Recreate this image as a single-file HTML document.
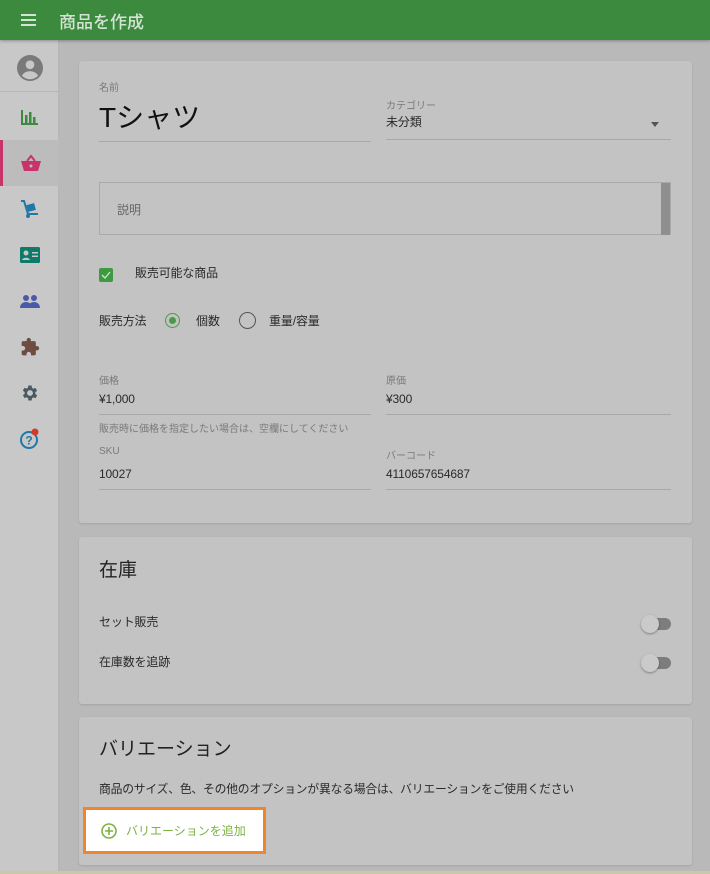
<!DOCTYPE html>
<html><head><meta charset="utf-8"><style>
*{box-sizing:border-box;margin:0;padding:0}
body{width:710px;height:874px;overflow:hidden;background:#b9b9b9;font-family:"Liberation Sans","Noto Sans CJK JP",sans-serif;color:#222;position:relative}
.hdr{position:absolute;left:0;top:0;width:710px;height:40px;background:#3b8a3e;box-shadow:0 1px 3px rgba(0,0,0,.3);z-index:2}
.hdr .t{position:absolute;left:59px;top:8px;font-size:17px;color:#d4e4d4;font-weight:500}
.side{position:absolute;left:0;top:40px;width:59px;height:834px;background:#c8c8c8;border-right:1px solid #b5b5b5}
.si{position:absolute;left:0;width:59px;height:46px;display:flex;align-items:center;justify-content:center}
.card{position:absolute;left:79px;width:613px;background:#c3c3c3;border-radius:3px;box-shadow:0 1px 2px rgba(0,0,0,.12)}
.lbl{position:absolute;font-size:10px;color:#7a7a7a}
.val{position:absolute;font-size:12px;color:#2a2a2a;letter-spacing:-0.15px}
.ln{position:absolute;height:1px;background:#a8a8a8}
.tg{position:absolute;width:28px;height:12px;border-radius:6px;background:#7d7d7d}
.tg:before{content:"";position:absolute;left:-2px;top:-3px;width:18px;height:18px;border-radius:50%;background:#cacaca;box-shadow:0 1px 2px rgba(0,0,0,.35)}
</style></head><body>
<div class="hdr">
<div style="position:absolute;left:21px;top:14px;width:15px;height:2px;background:#d4e4d4;box-shadow:0 5px 0 #d4e4d4,0 10px 0 #d4e4d4"></div>
<div class="t">商品を作成</div></div>
<div class="side">
<div class="si" style="top:4px;height:48px;border-bottom:1px solid #b5b5b5"><svg width="26" height="26" viewBox="0 0 24 24"><circle cx="12" cy="12" r="12" fill="#7a7a7a"/><circle cx="12" cy="9" r="4" fill="#c8c8c8"/><path d="M4.5 19c2-3 4.5-4 7.5-4s5.5 1 7.5 4A10 10 0 0 1 4.5 19z" fill="#c8c8c8"/></svg></div>
<div class="si" style="top:54px"><svg width="18" height="16" viewBox="0 0 18 16"><path d="M1 1v14h16" stroke="#3b8a3e" stroke-width="2" fill="none"/><rect x="4" y="6" width="2.5" height="8" fill="#3b8a3e"/><rect x="8" y="3" width="2.5" height="11" fill="#3b8a3e"/><rect x="12" y="8" width="2.5" height="6" fill="#3b8a3e"/></svg></div>
<div class="si" style="top:100px;background:#bcbcbc;border-left:3px solid #c8336a"><svg width="20" height="18" viewBox="0 0 20 18"><path d="M6 7l4-5 4 5" stroke="#c8336a" stroke-width="2" fill="none"/><path d="M0 7h20l-3 10H3z" fill="#c8336a"/><circle cx="10" cy="12" r="1.5" fill="#bcbcbc"/></svg></div>
<div class="si" style="top:146px"><svg width="20" height="20" viewBox="0 0 20 20"><path d="M1 2h3l4 13h10" stroke="#1f78a8" stroke-width="2" fill="none"/><rect x="7" y="5" width="8" height="7" fill="#1f78a8" transform="rotate(-15 11 8)"/><circle cx="8" cy="17" r="2" fill="#1f78a8"/></svg></div>
<div class="si" style="top:192px"><svg width="20" height="16" viewBox="0 0 20 16"><rect width="20" height="16" rx="1.5" fill="#0e7a6a"/><circle cx="6" cy="6" r="2.5" fill="#c8c8c8"/><path d="M2 13c1-3 7-3 8 0z" fill="#c8c8c8"/><rect x="12" y="5" width="6" height="1.5" fill="#c8c8c8"/><rect x="12" y="8.5" width="6" height="1.5" fill="#c8c8c8"/></svg></div>
<div class="si" style="top:238px"><svg width="20" height="14" viewBox="0 0 20 14"><circle cx="6" cy="4" r="3" fill="#4a5aa8"/><circle cx="14" cy="4" r="3" fill="#4a5aa8"/><path d="M0 14c0-4 3-6 6-6s6 2 6 6z M8 14c0-4 3-6 6-6s6 2 6 6z" fill="#4a5aa8"/></svg></div>
<div class="si" style="top:284px"><svg width="20" height="20" viewBox="0 0 24 24"><path d="M20.5 11H19V7a2 2 0 0 0-2-2h-4V3.5a2.5 2.5 0 0 0-5 0V5H4a2 2 0 0 0-2 2v3.8h1.5a2.7 2.7 0 0 1 0 5.4H2V20a2 2 0 0 0 2 2h3.8v-1.5a2.7 2.7 0 0 1 5.4 0V22H17a2 2 0 0 0 2-2v-4h1.5a2.5 2.5 0 0 0 0-5z" fill="#6d4c41"/></svg></div>
<div class="si" style="top:330px"><svg width="20" height="20" viewBox="0 0 24 24"><path d="M19.4 13a7.5 7.5 0 0 0 0-2l2.1-1.6-2-3.5-2.5 1a7 7 0 0 0-1.7-1L15 3h-4l-.4 2.7a7 7 0 0 0-1.7 1l-2.5-1-2 3.5L6.6 11a7.5 7.5 0 0 0 0 2l-2.1 1.6 2 3.5 2.5-1a7 7 0 0 0 1.7 1L11 21h4l.4-2.7a7 7 0 0 0 1.7-1l2.5 1 2-3.5zM13 15.5a3.5 3.5 0 1 1 0-7 3.5 3.5 0 0 1 0 7z" fill="#4a5a64" transform="translate(-1 0)"/></svg></div>
<div class="si" style="top:376px"><svg width="24" height="24" viewBox="0 0 24 24"><circle cx="11" cy="13" r="8" stroke="#1f78a8" stroke-width="2" fill="none"/><text x="11" y="17.5" font-size="12" font-weight="bold" fill="#1f78a8" text-anchor="middle" font-family="Liberation Sans">?</text><circle cx="17" cy="5" r="3.5" fill="#d03a2a"/></svg></div>
</div>

<div class="card" style="top:61px;height:462px">
<div class="lbl" style="left:20px;top:18px">名前</div>
<div style="position:absolute;left:20px;top:35px;font-size:28px;color:#111">Tシャツ</div>
<div class="ln" style="left:20px;top:80px;width:272px"></div>
<div class="lbl" style="left:307px;top:36px">カテゴリー</div>
<div class="val" style="left:307px;top:52px">未分類</div>
<div style="position:absolute;left:572px;top:61px;border:4px solid transparent;border-top:5px solid #555"></div>
<div class="ln" style="left:307px;top:78px;width:285px"></div>
<div style="position:absolute;left:20px;top:121px;width:572px;height:53px;border:1px solid #aaa"><div style="position:absolute;right:0;top:0;width:9px;height:52px;background:#8f8f8f"></div><span style="position:absolute;left:17px;top:18px;font-size:12px;color:#666">説明</span></div>
<div style="position:absolute;left:20px;top:207px;width:14px;height:14px;background:#3e9a40;border-radius:2px"><svg width="14" height="14"><path d="M3 7l3 3 5-6" stroke="#cfe6cf" stroke-width="1.3" fill="none"/></svg></div>
<div class="val" style="left:56px;top:203px">販売可能な商品</div>
<div class="val" style="left:20px;top:251px">販売方法</div>
<div style="position:absolute;left:86px;top:252px;width:15px;height:15px;border:1.5px solid #4a9a4c;border-radius:50%"><div style="position:absolute;left:2.5px;top:2.5px;width:7px;height:7px;border-radius:50%;background:#4a9a4c"></div></div>
<div class="val" style="left:117px;top:251px">個数</div>
<div style="position:absolute;left:160px;top:251px;width:17px;height:17px;border:1.5px solid #555;border-radius:50%"></div>
<div class="val" style="left:190px;top:251px">重量/容量</div>
<div class="lbl" style="left:20px;top:311px">価格</div>
<div class="val" style="left:20px;top:331px">¥1,000</div>
<div class="ln" style="left:20px;top:353px;width:272px"></div>
<div class="lbl" style="left:20px;top:359px">販売時に価格を指定したい場合は、空欄にしてください</div>
<div class="lbl" style="left:20px;top:385px">SKU</div>
<div class="val" style="left:20px;top:406px">10027</div>
<div class="ln" style="left:20px;top:428px;width:272px"></div>
<div class="lbl" style="left:307px;top:311px">原価</div>
<div class="val" style="left:307px;top:331px">¥300</div>
<div class="ln" style="left:307px;top:353px;width:285px"></div>
<div class="lbl" style="left:307px;top:386px">バーコード</div>
<div class="val" style="left:307px;top:406px">4110657654687</div>
<div class="ln" style="left:307px;top:428px;width:285px"></div>
</div>

<div class="card" style="top:537px;height:167px">
<div style="position:absolute;left:20px;top:18px;font-size:19px;color:#222">在庫</div>
<div class="val" style="left:20px;top:76px">セット販売</div>
<div class="tg" style="left:564px;top:81px"></div>
<div class="val" style="left:20px;top:116px">在庫数を追跡</div>
<div class="tg" style="left:564px;top:120px"></div>
</div>

<div class="card" style="top:717px;height:148px">
<div style="position:absolute;left:20px;top:17px;font-size:19px;color:#222">バリエーション</div>
<div class="val" style="left:20px;top:63px;font-size:11.8px;letter-spacing:-0.2px">商品のサイズ、色、その他のオプションが異なる場合は、バリエーションをご使用ください</div>
</div>
<div style="position:absolute;left:83px;top:807px;width:183px;height:47px;background:#fff;border:3px solid #f0862a">
<svg style="position:absolute;left:15px;top:13px" width="16" height="16" viewBox="0 0 16 16"><circle cx="8" cy="8" r="7" stroke="#7cb342" stroke-width="1.6" fill="none"/><path d="M8 4v8M4 8h8" stroke="#7cb342" stroke-width="1.6"/></svg>
<span style="position:absolute;left:40px;top:12px;font-size:12px;color:#7cb342">バリエーションを追加</span></div>
<div style="position:absolute;left:0;top:871px;width:710px;height:3px;background:#c9c9a8"></div>
</body></html>
